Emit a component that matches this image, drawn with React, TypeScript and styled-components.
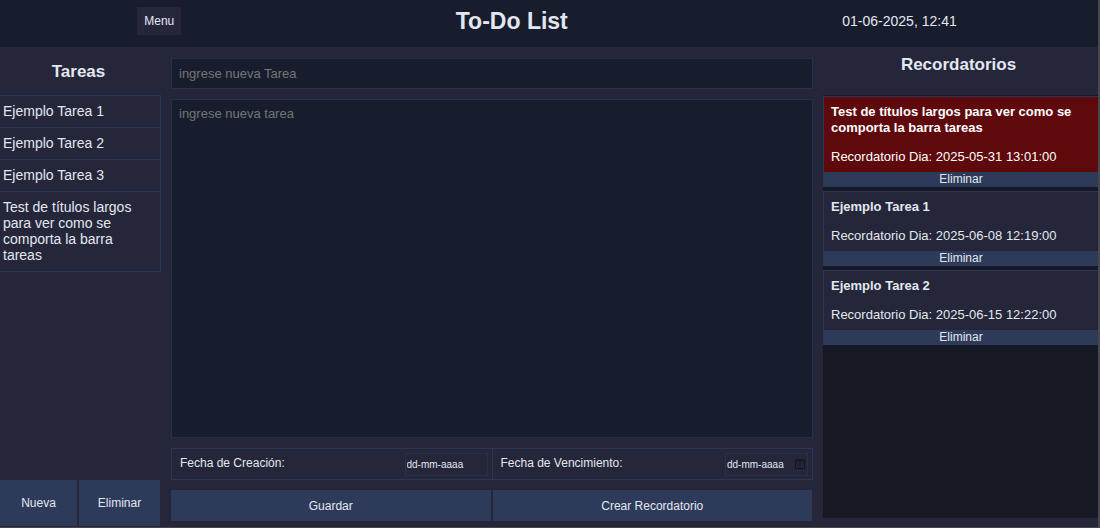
import React from "react";
import styled, { createGlobalStyle } from "styled-components";

const color = {
  base: "#181d2e",
  panel: "#25263a",
  deep: "#161824",
  line: "#2a3759",
  softLine: "#24304c",
  action: "#2e3a5a",
  alert: "#5e090c",
  text: "#e2e8f0",
  muted: "#757575",
  edge: "#47474c",
};

const GlobalStyle = createGlobalStyle`
  *, *::before, *::after { box-sizing: border-box; }
  body {
    margin: 0;
    background: ${color.panel};
    color: ${color.text};
    font: 14px/16px "Liberation Sans", Arial, sans-serif;
  }
  h1, h2, h3, p, ul { margin: 0; padding: 0; }
  button, input, textarea { font-family: inherit; color: inherit; margin: 0; border-radius: 0; }
`;

const Page = styled.div`
  display: flex;
  flex-direction: column;
  min-height: 100vh;
  border-right: 2px solid ${color.edge};
  border-bottom: 1px solid ${color.edge};
`;

const Header = styled.header`
  display: flex;
  justify-content: space-around;
  align-items: flex-start;
  padding: 7px 4px 7px 0;
  min-height: 47px;
  background: ${color.base};
`;

const MenuButton = styled.button`
  height: 28px;
  padding: 0 7px;
  border: 0;
  background: ${color.panel};
  font-size: 12px;
`;

const PageTitle = styled.h1`
  font-size: 23px;
  line-height: 28px;
`;

const Clock = styled.time`
  line-height: 28px;
`;

const Columns = styled.main`
  flex: 1;
  display: grid;
  grid-template-columns: 161px minmax(0, 1fr) 275px;
  column-gap: 10px;
`;

const Sidebar = styled.aside`
  display: flex;
  flex-direction: column;
  padding-bottom: 1px;
`;

const PanelTitle = styled.h2<{ $top: number }>`
  height: 48px;
  padding: ${(p) => p.$top}px 4px 0 0;
  font-size: 17px;
  line-height: 20px;
  text-align: center;
`;

const TaskList = styled.ul`
  flex: 1;
  list-style: none;
`;

const Task = styled.li`
  padding: 7px 24px 8px 3px;
  border: solid ${color.line};
  border-width: 1px 1px 0 0;
  &:last-child { border-bottom-width: 1px; }
`;

const ButtonRow = styled.div<{ $columns: string }>`
  display: grid;
  grid-template-columns: ${(p) => p.$columns};
  gap: 2px;
  padding: 0 1px 0 0;
`;

const ActionButton = styled.button<{ $height: number }>`
  height: ${(p) => p.$height}px;
  padding: 0;
  border: 0;
  background: ${color.action};
  font-size: 12px;
`;

const Editor = styled.form`
  display: flex;
  flex-direction: column;
  gap: 10px;
  padding: 11px 0 6px;
`;

const TitleInput = styled.input`
  height: 31px;
  padding: 0 7px;
  border: 1px solid ${color.softLine};
  background: ${color.base};
  font-size: 13px;
  &::placeholder { color: ${color.muted}; opacity: 1; }
`;

const BodyInput = styled.textarea`
  flex: 1;
  display: block;
  padding: 6px 7px;
  border: 1px solid ${color.softLine};
  background: ${color.base};
  font-size: 13px;
  line-height: 16px;
  resize: none;
  &::placeholder { color: ${color.muted}; opacity: 1; }
`;

const DateRow = styled.div`
  display: grid;
  grid-template-columns: 1fr 1fr;
  border: solid ${color.line};
  border-width: 1px 0 1px 1px;
`;

const DateField = styled.div`
  display: flex;
  justify-content: space-between;
  align-items: center;
  height: 30px;
  padding: 0 4px 0 8px;
  border-right: 1px solid ${color.line};
`;

const DateLabel = styled.label`
  font-size: 12px;
  padding-bottom: 2px;
`;

const DateBox = styled.span`
  display: flex;
  align-items: center;
  width: 83px;
  height: 23px;
  padding-right: 2px;
  border: 1px solid #2b2f47;
`;

const DateInput = styled.input`
  flex: 1;
  min-width: 0;
  padding: 0 1px;
  border: 0;
  background: transparent;
  font-size: 10px;
  &::placeholder { color: ${color.text}; opacity: 1; }
`;

const PickerButton = styled.button`
  display: flex;
  padding: 0;
  border: 0;
  background: transparent;
`;

const Reminders = styled.aside`
  display: flex;
  flex-direction: column;
  padding-bottom: 9px;
`;

const ReminderList = styled.ul`
  flex: 1;
  display: flex;
  flex-direction: column;
  gap: 4px;
  padding-top: 1px;
  background: ${color.deep};
  list-style: none;
`;

const Reminder = styled.li<{ $overdue: boolean }>`
  border: solid ${color.line};
  border-width: 1px 0 0 1px;
  background: ${(p) => (p.$overdue ? color.alert : color.panel)};
  color: ${(p) => (p.$overdue ? "#ffffff" : color.text)};
`;

const ReminderTitle = styled.h3`
  padding: 7px 7px 0;
  font-size: 13px;
  line-height: 16px;
`;

const ReminderDate = styled.p`
  padding: 13px 7px 7px;
  font-size: 13px;
  line-height: 16px;
`;

const RemoveButton = styled.button`
  display: block;
  width: 100%;
  height: 15px;
  padding: 0;
  border: 0;
  background: ${color.action};
  color: ${color.text};
  font-size: 12px;
  line-height: 15px;
`;

const longTitle = "Test de títulos largos para ver como se comporta la barra tareas";
const tasks = ["Ejemplo Tarea 1", "Ejemplo Tarea 2", "Ejemplo Tarea 3", longTitle];
const reminders = [
  { title: longTitle, date: "2025-05-31 13:01:00", overdue: true },
  { title: "Ejemplo Tarea 1", date: "2025-06-08 12:19:00", overdue: false },
  { title: "Ejemplo Tarea 2", date: "2025-06-15 12:22:00", overdue: false },
];

const CalendarIcon = () => (
  <svg width="10" height="10" viewBox="0 0 10 10" fill="none" stroke="#11131d" aria-hidden="true">
    <rect x="0.5" y="0.5" width="9" height="9" rx="1" />
    <path d="M1 2h8M2.5 5h1M4.5 5h1M6.5 5h1M2.5 7h1M4.5 7h1" />
  </svg>
);

export default function App() {
  return (
    <>
      <GlobalStyle />
      <Page>
        <Header>
          <MenuButton type="button">Menu</MenuButton>
          <PageTitle>To-Do List</PageTitle>
          <Clock dateTime="2025-06-01T12:41">01-06-2025, 12:41</Clock>
        </Header>
        <Columns>
          <Sidebar>
            <PanelTitle $top={15}>Tareas</PanelTitle>
            <TaskList>
              {tasks.map((task) => (
                <Task key={task}>{task}</Task>
              ))}
            </TaskList>
            <ButtonRow $columns="77px 1fr">
              <ActionButton type="button" $height={46}>Nueva</ActionButton>
              <ActionButton type="button" $height={46}>Eliminar</ActionButton>
            </ButtonRow>
          </Sidebar>
          <Editor onSubmit={(e) => e.preventDefault()}>
            <TitleInput aria-label="Título" placeholder="ingrese nueva Tarea" />
            <BodyInput aria-label="Tarea" placeholder="ingrese nueva tarea" />
            <DateRow>
              <DateField>
                <DateLabel htmlFor="created">Fecha de Creación:</DateLabel>
                <DateBox>
                  <DateInput id="created" placeholder="dd-mm-aaaa" readOnly />
                </DateBox>
              </DateField>
              <DateField>
                <DateLabel htmlFor="due">Fecha de Vencimiento:</DateLabel>
                <DateBox>
                  <DateInput id="due" placeholder="dd-mm-aaaa" />
                  <PickerButton type="button" aria-label="Calendario">
                    <CalendarIcon />
                  </PickerButton>
                </DateBox>
              </DateField>
            </DateRow>
            <ButtonRow $columns="1fr 1fr">
              <ActionButton type="submit" $height={31}>Guardar</ActionButton>
              <ActionButton type="button" $height={31}>Crear Recordatorio</ActionButton>
            </ButtonRow>
          </Editor>
          <Reminders>
            <PanelTitle $top={8}>Recordatorios</PanelTitle>
            <ReminderList>
              {reminders.map((r) => (
                <Reminder key={r.date} $overdue={r.overdue}>
                  <ReminderTitle>{r.title}</ReminderTitle>
                  <ReminderDate>Recordatorio Dia: {r.date}</ReminderDate>
                  <RemoveButton type="button">Eliminar</RemoveButton>
                </Reminder>
              ))}
            </ReminderList>
          </Reminders>
        </Columns>
      </Page>
    </>
  );
}
